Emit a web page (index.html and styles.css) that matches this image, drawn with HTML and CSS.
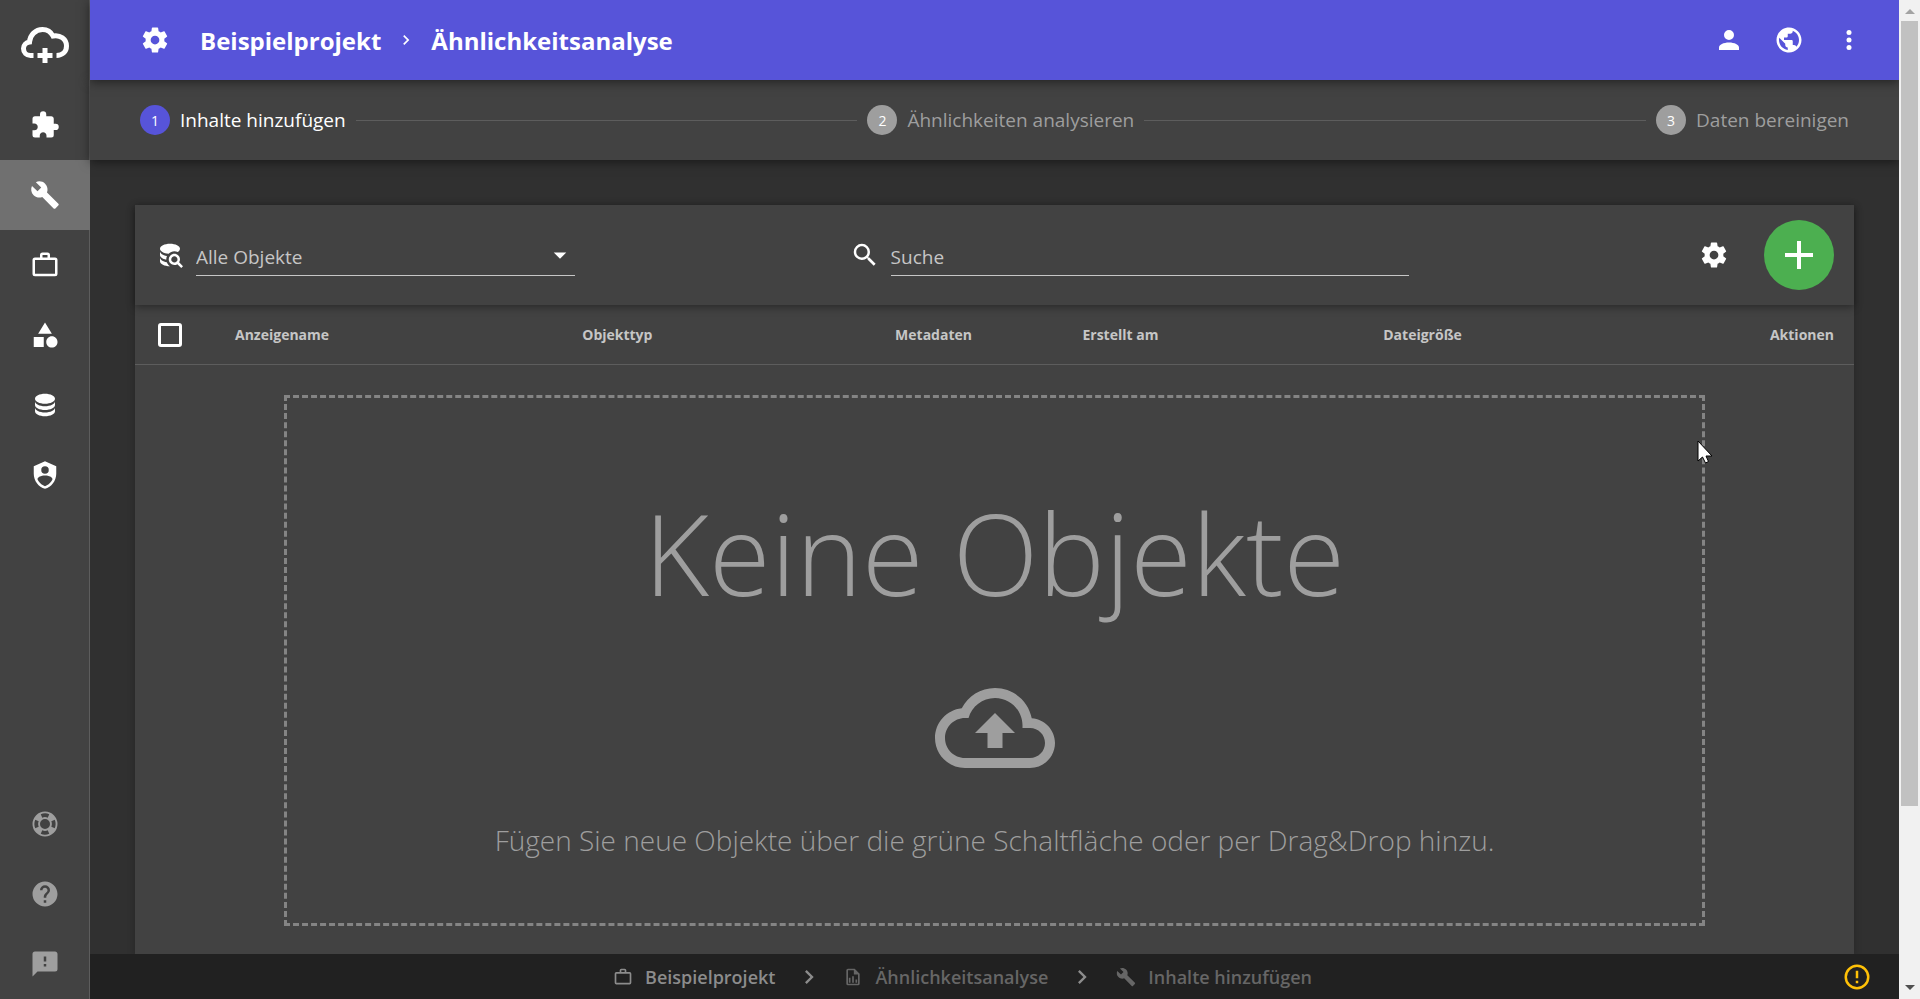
FILE: index.html
```
<!DOCTYPE html>
<html lang="de">
<head>
  <meta charset="UTF-8">
  <meta name="viewport" content="width=device-width, initial-scale=1.0">
  <title>Ähnlichkeitsanalyse</title>
  <link rel="stylesheet" href="styles.css">
</head>
<body>
  <!-- icon sprite -->
  <svg class="sprite" aria-hidden="true">
    <symbol id="i-cog" viewBox="0 0 24 24"><path d="M12,15.5A3.5,3.5 0 0,1 8.5,12A3.5,3.5 0 0,1 12,8.5A3.5,3.5 0 0,1 15.5,12A3.5,3.5 0 0,1 12,15.5M19.43,12.97C19.47,12.65 19.5,12.33 19.5,12C19.5,11.67 19.47,11.34 19.43,11L21.54,9.37C21.73,9.22 21.78,8.95 21.66,8.73L19.66,5.27C19.54,5.05 19.27,4.96 19.05,5.05L16.56,6.05C16.04,5.66 15.5,5.32 14.87,5.07L14.5,2.42C14.46,2.18 14.25,2 14,2H10C9.75,2 9.54,2.18 9.5,2.42L9.13,5.07C8.5,5.32 7.96,5.66 7.44,6.05L4.95,5.05C4.73,4.96 4.46,5.05 4.34,5.27L2.34,8.73C2.21,8.95 2.27,9.22 2.46,9.37L4.57,11C4.53,11.34 4.5,11.67 4.5,12C4.5,12.33 4.53,12.65 4.57,12.97L2.46,14.63C2.27,14.78 2.21,15.05 2.34,15.27L4.34,18.73C4.46,18.95 4.73,19.03 4.95,18.95L7.44,17.94C7.96,18.34 8.5,18.68 9.13,18.93L9.5,21.58C9.54,21.82 9.75,22 10,22H14C14.25,22 14.46,21.82 14.5,21.58L14.87,18.93C15.5,18.67 16.04,18.34 16.56,17.94L19.05,18.95C19.27,19.03 19.54,18.95 19.66,18.73L21.66,15.27C21.78,15.05 21.73,14.78 21.54,14.63L19.43,12.97Z"/></symbol>
    <symbol id="i-wrench" viewBox="0 0 24 24"><path d="M22.7,19L13.6,9.9C14.5,7.6 14,4.9 12.1,3C10.1,1 7.1,0.6 4.7,1.7L9,6L6,9L1.6,4.7C0.4,7.1 0.9,10.1 2.9,12.1C4.8,14 7.5,14.5 9.8,13.6L18.9,22.7C19.3,23.1 19.9,23.1 20.3,22.7L22.6,20.4C23.1,20 23.1,19.3 22.7,19Z"/></symbol>
    <symbol id="i-briefcase" viewBox="0 0 24 24"><path fill-rule="evenodd" d="M20,6H16V4A2,2 0 0,0 14,2H10A2,2 0 0,0 8,4V6H4A2,2 0 0,0 2,8V19A2,2 0 0,0 4,21H20A2,2 0 0,0 22,19V8A2,2 0 0,0 20,6ZM10,4H14V6H10ZM4,8H20V19H4Z"/></symbol>
    <symbol id="i-chevron" viewBox="0 0 24 24"><path d="M8.59,16.58L13.17,12L8.59,7.41L10,6L16,12L10,18L8.59,16.58Z"/></symbol>
  </svg>

  <nav class="sidebar" aria-label="Hauptnavigation">
    <a class="logo" href="#" aria-label="Startseite">
      <svg viewBox="0 0 48 36"><path class="logo-cloud" d="M12.5 28.500H9.500C5.500 28.500 2.500 25.500 2.500 21.500C2.500 18 5 15.500 8.500 15C9 8 14.500 2.500 21.500 2.500C26.500 2.500 30 5 32 9C39 7.500 45.500 12 45.500 19C45.500 25 41 28.500 35.500 28.500"/><path d="M21.500 21H26.500V26H31.5V31H26.500V36H21.500V31H16.5V26H21.500Z"/></svg>
    </a>
    <a class="nav-item" href="#" aria-label="Erweiterungen">
      <svg class="icon" viewBox="0 0 24 24"><path d="M20.5,11H19V7C19,5.89 18.1,5 17,5H13V3.5A2.5,2.5 0 0,0 10.5,1A2.5,2.5 0 0,0 8,3.5V5H4A2,2 0 0,0 2,7V10.8H3.5C5,10.8 6.2,12 6.2,13.5C6.2,15 5,16.2 3.5,16.2H2V20A2,2 0 0,0 4,22H7.8V20.5C7.8,19 9,17.8 10.5,17.8C12,17.8 13.2,19 13.2,20.5V22H17A2,2 0 0,0 19,20V16H20.5A2.5,2.5 0 0,0 23,13.5A2.500,2.500 0 0,0 20.500,11Z"/></svg>
    </a>
    <a class="nav-item active" href="#" aria-label="Werkzeuge">
      <svg class="icon"><use href="#i-wrench"/></svg>
    </a>
    <a class="nav-item" href="#" aria-label="Projekte">
      <svg class="icon"><use href="#i-briefcase"/></svg>
    </a>
    <a class="nav-item" href="#" aria-label="Objekttypen">
      <svg class="icon" viewBox="0 0 24 24"><path d="M11,13.5V21.5H3V13.5H11M12,2L17.5,11H6.5L12,2M17.5,13C20,13 22,15 22,17.5C22,20 20,22 17.5,22C15,22 13,20 13,17.5C13,15 15,13 17.5,13Z"/></svg>
    </a>
    <a class="nav-item" href="#" aria-label="Datenbank">
      <svg class="icon" viewBox="0 0 24 24"><path d="M12,3C7.58,3 4,4.79 4,7C4,9.21 7.58,11 12,11C16.42,11 20,9.21 20,7C20,4.79 16.42,3 12,3M4,9V12C4,14.21 7.58,16 12,16C16.42,16 20,14.21 20,12V9C20,11.21 16.42,13 12,13C7.58,13 4,11.21 4,9M4,14V17C4,19.21 7.58,21 12,21C16.42,21 20,19.21 20,17V14C20,16.21 16.42,18 12,18C7.58,18 4,16.21 4,14Z"/></svg>
    </a>
    <a class="nav-item" href="#" aria-label="Verwaltung">
      <svg class="icon" viewBox="0 0 24 24"><path fill-rule="evenodd" d="M12,1L3,5V11C3,16.55 6.84,21.74 12,23C17.16,21.74 21,16.55 21,11V5L12,1M12,5A3,3 0 0,1 15,8A3,3 0 0,1 12,11A3,3 0 0,1 9,8A3,3 0 0,1 12,5M17.13,17C15.92,18.85 14.11,20.24 12,20.92C9.89,20.24 8.08,18.85 6.87,17C6.53,16.5 6.24,16 6,15.47C6,13.82 8.71,12.47 12,12.47C15.29,12.47 18,13.79 18,15.47C17.76,16 17.47,16.5 17.13,17Z"/></svg>
    </a>
    <div class="sidebar-bottom">
      <a class="nav-item" href="#" aria-label="Support">
        <svg class="icon" viewBox="0 0 24 24"><path fill-rule="evenodd" d="M19.79,15.41C20.74,13.24 20.74,10.75 19.79,8.59L17.05,9.83C17.65,11.21 17.65,12.78 17.06,14.17L19.79,15.41M15.42,4.21C13.25,3.26 10.76,3.26 8.59,4.21L9.83,6.94C11.22,6.35 12.79,6.35 14.18,6.95L15.42,4.21M4.21,8.58C3.26,10.76 3.26,13.24 4.21,15.42L6.95,14.17C6.35,12.79 6.35,11.21 6.95,9.82L4.21,8.58M8.59,19.79C10.76,20.74 13.25,20.74 15.42,19.78L14.18,17.05C12.8,17.65 11.22,17.65 9.84,17.06L8.59,19.79M12,2A10,10 0 0,1 22,12A10,10 0 0,1 12,22A10,10 0 0,1 2,12A10,10 0 0,1 12,2M12,8A4,4 0 0,0 8,12A4,4 0 0,0 12,16A4,4 0 0,0 16,12A4,4 0 0,0 12,8Z"/></svg>
      </a>
      <a class="nav-item" href="#" aria-label="Hilfe">
        <svg class="icon" viewBox="0 0 24 24"><path fill-rule="evenodd" d="M15.07,11.25L14.17,12.17C13.45,12.89 13,13.5 13,15H11V14.5C11,13.39 11.45,12.39 12.17,11.67L13.41,10.41C13.78,10.05 14,9.55 14,9C14,7.89 13.1,7 12,7A2,2 0 0,0 10,9H8A4,4 0 0,1 12,5A4,4 0 0,1 16,9C16,9.88 15.64,10.67 15.07,11.25M13,19H11V17H13M12,2A10,10 0 0,0 2,12A10,10 0 0,0 12,22A10,10 0 0,0 22,12C22,6.47 17.5,2 12,2Z"/></svg>
      </a>
      <a class="nav-item" href="#" aria-label="Feedback">
        <svg class="icon" viewBox="0 0 24 24"><path fill-rule="evenodd" d="M13,10H11V6H13M13,14H11V12H13M20,2H4A2,2 0 0,0 2,4V22L6,18H20A2,2 0 0,0 22,16V4C22,2.89 21.1,2 20,2Z"/></svg>
      </a>
    </div>
  </nav>

  <div class="page">
    <header class="topbar">
      <svg class="icon"><use href="#i-cog"/></svg>
      <h1 class="title">
        <a href="#">Beispielprojekt</a>
        <svg class="icon-small"><use href="#i-chevron"/></svg>
        <span>Ähnlichkeitsanalyse</span>
      </h1>
      <div class="topbar-actions">
        <button type="button" aria-label="Benutzer"><svg class="icon" viewBox="0 0 24 24"><path d="M12,4A4,4 0 0,1 16,8A4,4 0 0,1 12,12A4,4 0 0,1 8,8A4,4 0 0,1 12,4M12,14C16.42,14 20,15.79 20,18V20H4V18C4,15.79 7.58,14 12,14Z"/></svg></button>
        <button type="button" aria-label="Sprache"><svg class="icon" viewBox="0 0 24 24"><path d="M12 2C6.48 2 2 6.48 2 12s4.48 10 10 10 10-4.48 10-10S17.52 2 12 2zm-1 17.93c-3.95-.49-7-3.85-7-7.93 0-.62.08-1.21.21-1.79L9 15v1c0 1.1.9 2 2 2v1.93zm6.9-2.54c-.26-.81-1-1.39-1.9-1.39h-1v-3c0-.55-.45-1-1-1H8v-2h2c.55 0 1-.45 1-1V7h2c1.1 0 2-.9 2-2v-.41c2.93 1.19 5 4.06 5 7.41 0 2.080-.8 3.970-2.100 5.390z"/></svg></button>
        <button type="button" aria-label="Menü"><svg class="icon" viewBox="0 0 24 24"><circle cx="12" cy="6" r="2"/><circle cx="12" cy="12" r="2"/><circle cx="12" cy="18" r="2"/></svg></button>
      </div>
    </header>

    <div class="stepper">
      <div class="step current"><span class="step-number">1</span>Inhalte hinzufügen</div>
      <div class="step-line"></div>
      <div class="step"><span class="step-number">2</span>Ähnlichkeiten analysieren</div>
      <div class="step-line"></div>
      <div class="step"><span class="step-number">3</span>Daten bereinigen</div>
    </div>

    <main class="content">
      <section class="card">
        <div class="toolbar">
          <div class="field filter">
            <svg class="icon" viewBox="0 0 24 24"><path d="M18.68,12.32C16.92,10.56 14.07,10.57 12.32,12.33C10.56,14.09 10.56,16.94 12.32,18.69C13.81,20.17 16.11,20.43 17.89,19.32L21,22.39L22.39,21L19.3,17.89C20.43,16.12 20.17,13.8 18.68,12.32M17.27,17.27C16.29,18.25 14.71,18.24 13.73,17.27C12.76,16.29 12.76,14.71 13.74,13.73C14.71,12.76 16.29,12.76 17.27,13.73C18.24,14.71 18.24,16.29 17.27,17.27M10.9,20.1C10.25,19.44 9.74,18.65 9.42,17.78C6.27,17.25 4,15.76 4,14V17C4,19.21 7.58,21 12,21V21C11.6,20.74 11.23,20.44 10.9,20.1M4,9V12C4,13.68 6.07,15.12 9,15.7C9,15.63 9,15.57 9,15.5C9,14.57 9.2,13.65 9.58,12.81C6.34,12.3 4,10.79 4,9M12,3C7.58,3 4,4.79 4,7C4,9 7,10.68 10.85,11H10.9C12.1,9.74 13.76,9 15.5,9C16.41,9 17.31,9.19 18.14,9.56C19.17,9.09 19.87,8.12 20,7C20,4.79 16.42,3 12,3Z"/></svg>
            <div class="select-wrap">
              <select aria-label="Objektfilter">
                <option>Alle Objekte</option>
              </select>
              <svg class="icon select-arrow" viewBox="0 0 24 24"><path d="M7,10L12,15L17,10H7Z"/></svg>
            </div>
          </div>
          <div class="field search">
            <svg class="icon" viewBox="0 0 24 24"><path d="M9.5,3A6.5,6.5 0 0,1 16,9.5C16,11.11 15.41,12.59 14.44,13.73L14.71,14H15.5L20.5,19L19,20.5L14,15.5V14.71L13.73,14.44C12.59,15.41 11.11,16 9.5,16A6.5,6.5 0 0,1 3,9.5A6.5,6.5 0 0,1 9.5,3M9.5,5C7,5 5,7 5,9.5C5,12 7,14 9.5,14C12,14 14,12 14,9.5C14,7 12,5 9.5,5Z"/></svg>
            <input type="text" placeholder="Suche" aria-label="Suche">
          </div>
          <div class="toolbar-actions">
            <button type="button" class="settings" aria-label="Einstellungen"><svg class="icon"><use href="#i-cog"/></svg></button>
            <button type="button" class="add" aria-label="Hinzufügen"><svg viewBox="0 0 28 28"><path d="M12 0H16V12H28V16H16V28H12V16H0V12H12Z"/></svg></button>
          </div>
        </div>

        <table class="objects">
          <thead>
            <tr>
              <th class="col-check"><input type="checkbox" aria-label="Alle auswählen"></th>
              <th class="col-name">Anzeigename</th>
              <th class="col-type">Objekttyp</th>
              <th class="col-meta">Metadaten</th>
              <th class="col-created">Erstellt am</th>
              <th class="col-size">Dateigröße</th>
              <th class="col-actions">Aktionen</th>
            </tr>
          </thead>
        </table>

        <div class="dropzone">
          <h2>Keine Objekte</h2>
          <svg class="upload" viewBox="0 0 24 24"><path fill-rule="evenodd" d="M19.35 10.04C18.67 6.59 15.64 4 12 4 9.11 4 6.6 5.64 5.35 8.04 2.34 8.36 0 10.91 0 14c0 3.31 2.69 6 6 6h13c2.76 0 5-2.24 5-5 0-2.64-2.05-4.78-4.65-4.96zM19 18H6c-2.21 0-4-1.79-4-4s1.79-4 4-4h.71C7.370 7.690 9.480 6 12 6c3.040 0 5.500 2.460 5.500 5.500v.5H19c1.660 0 3 1.340 3 3s-1.340 3-3 3z"/><path d="M12 9L16 13H13.500V16H10.500V13H8Z"/></svg>
          <p>Fügen Sie neue Objekte über die grüne Schaltfläche oder per Drag&amp;Drop hinzu.</p>
          <svg class="pointer" viewBox="0 0 16 24" aria-hidden="true"><path d="M1 1V21L5.500 17L8.500 23L11.500 21.500L9 16H15Z"/></svg>
        </div>
      </section>
    </main>

    <footer class="footer">
      <nav class="crumbs" aria-label="Pfad">
        <a class="crumb" href="#"><svg class="icon-small"><use href="#i-briefcase"/></svg>Beispielprojekt</a>
        <svg class="crumb-sep"><use href="#i-chevron"/></svg>
        <a class="crumb dim" href="#"><svg class="icon-small" viewBox="0 0 24 24"><path d="M14,2L20,8V20A2,2 0 0,1 18,22H6A2,2 0 0,1 4,20V4A2,2 0 0,1 6,2H14M18,20V9H13V4H6V20H18M9,13V19H7V13H9M15,15V19H17V15H15M11,11V19H13V11H11Z"/></svg>Ähnlichkeitsanalyse</a>
        <svg class="crumb-sep"><use href="#i-chevron"/></svg>
        <a class="crumb dim" href="#"><svg class="icon-small"><use href="#i-wrench"/></svg>Inhalte hinzufügen</a>
      </nav>
      <button type="button" class="alert" aria-label="Warnungen"><svg class="icon" viewBox="0 0 24 24"><path d="M11,15H13V17H11V15M11,7H13V13H11V7M12,2C6.47,2 2,6.5 2,12A10,10 0 0,0 12,22A10,10 0 0,0 22,12A10,10 0 0,0 12,2M12,20A8,8 0 0,1 4,12A8,8 0 0,1 12,4A8,8 0 0,1 20,12A8,8 0 0,1 12,20Z"/></svg></button>
    </footer>
  </div>

  <div class="scrollbar" aria-hidden="true">
    <svg viewBox="0 0 10 5"><path class="up" d="M5 0L10 5H0Z"/></svg>
    <div class="scroll-track"><div class="scroll-thumb"></div></div>
    <svg viewBox="0 0 10 5"><path class="down" d="M0 0H10L5 5Z"/></svg>
  </div>
</body>
</html>
```
FILE: styles.css
```
* {
  box-sizing: border-box;
}
body {
  margin: 0;
  display: flex;
  height: 100vh;
  overflow: hidden;
  background: #303030;
  color: #fff;
  font-family: "Open Sans", "Noto Sans", sans-serif;
  font-size: 19px;
}
a {
  color: inherit;
  text-decoration: none;
}
button {
  display: flex;
  align-items: center;
  justify-content: center;
  padding: 0;
  border: none;
  background: none;
  color: inherit;
  cursor: pointer;
}
svg {
  display: block;
  flex: none;
  fill: currentColor;
}
.sprite {
  position: absolute;
  width: 0;
  height: 0;
}
.icon {
  width: 30px;
  height: 30px;
}
.icon-small {
  width: 20px;
  height: 20px;
}

/* sidebar */
.sidebar {
  flex: none;
  display: flex;
  flex-direction: column;
  width: 90px;
  background: linear-gradient(#5d5d5d, #5d5d5d) right / 1px 100% no-repeat #424242;
}
.logo {
  display: flex;
  align-items: center;
  justify-content: center;
  height: 90px;
}
.logo svg {
  width: 48px;
  height: 36px;
}
.logo-cloud {
  fill: none;
  stroke: #fff;
  stroke-width: 5;
}
.nav-item {
  display: flex;
  align-items: center;
  justify-content: center;
  height: 70px;
}
.nav-item.active {
  background: #707070;
}
.sidebar-bottom {
  margin-top: auto;
  color: #9e9e9e;
}

/* main column */
.page {
  flex: 1;
  min-width: 0;
  display: flex;
  flex-direction: column;
}
.topbar {
  position: relative;
  z-index: 2;
  flex: none;
  display: flex;
  align-items: center;
  gap: 30px;
  height: 80px;
  padding: 0 20px 0 50px;
  background: #5754d9;
  box-shadow: 0 2px 10px rgba(0, 0, 0, 0.5);
}
.title {
  display: flex;
  align-items: center;
  gap: 15px;
  margin: 0;
  font-size: 24px;
  font-weight: 700;
}
.topbar-actions {
  display: flex;
  margin-left: auto;
}
.topbar-actions button {
  width: 60px;
  height: 60px;
}
.stepper {
  position: relative;
  z-index: 1;
  flex: none;
  display: flex;
  align-items: center;
  gap: 10px;
  height: 80px;
  padding: 0 50px;
  background: #424242;
  box-shadow: 0 2px 10px rgba(0, 0, 0, 0.5);
}
.step {
  display: flex;
  align-items: center;
  gap: 10px;
  color: #9e9e9e;
}
.step.current {
  color: #fff;
}
.step-number {
  display: flex;
  align-items: center;
  justify-content: center;
  width: 30px;
  height: 30px;
  border-radius: 50%;
  background: #9e9e9e;
  color: #fff;
  font-size: 14px;
}
.step.current .step-number {
  background: #5754d9;
}
.step-line {
  flex: 1;
  height: 1px;
  background: #5d5d5d;
}

/* content */
.content {
  flex: 1;
  min-height: 0;
  display: flex;
  padding: 45px 45px 0;
}
.card {
  flex: 1;
  min-width: 0;
  background: #424242;
  box-shadow: 0 2px 8px rgba(0, 0, 0, 0.2);
}
.toolbar {
  position: relative;
  display: flex;
  align-items: center;
  justify-content: space-between;
  height: 100px;
  padding: 0 20px;
  box-shadow: 0 2px 8px rgba(0, 0, 0, 0.4);
}
.field {
  display: flex;
  align-items: center;
  gap: 11px;
}
.filter {
  width: 25%;
}
.search {
  width: 33.33%;
}
.select-wrap {
  position: relative;
  flex: 1;
}
.select-arrow {
  position: absolute;
  top: 6px;
  right: 0;
  pointer-events: none;
}
.field select,
.field input {
  display: block;
  width: 100%;
  height: 42px;
  padding: 4px 0 0;
  border: none;
  border-bottom: 1px solid #c6c6c6;
  border-radius: 0;
  outline: none;
  appearance: none;
  background: none;
  color: #c6c6c6;
  font: inherit;
}
.field input::placeholder {
  color: #c6c6c6;
  opacity: 1;
}
.toolbar-actions {
  display: flex;
  align-items: center;
  gap: 20px;
}
.settings {
  width: 60px;
  height: 60px;
}
.add {
  width: 70px;
  height: 70px;
  border-radius: 50%;
  background: #4caf50;
}
.add svg {
  width: 28px;
  height: 28px;
}

.objects {
  width: 100%;
  table-layout: fixed;
  border-spacing: 0;
}
.objects th {
  height: 60px;
  padding: 0 20px;
  border-bottom: 1px solid #5d5d5d;
  color: #c6c6c6;
  font-size: 14px;
  font-weight: 700;
  text-align: left;
}
.objects .col-check {
  width: 80px;
}
.col-name {
  width: 20.2%;
}
.col-type {
  width: 18.2%;
}
.col-meta {
  width: 10.9%;
}
.col-created {
  width: 17.5%;
}
.objects .col-actions {
  text-align: right;
}
.objects input {
  display: block;
  width: 24px;
  height: 24px;
  margin: 0 3px;
  border: 3px solid #fff;
  border-radius: 3px;
  appearance: none;
}

.dropzone {
  position: relative;
  display: flex;
  flex-direction: column;
  align-items: center;
  margin: 30px 149px 0;
  padding: 75px 20px 63px;
  border: 3px dashed #848484;
  color: #9e9e9e;
  font-weight: 300;
}
.dropzone h2 {
  margin: 0;
  font-size: 112px;
  font-weight: 300;
  line-height: 160px;
}
.upload {
  width: 120px;
  height: 120px;
  margin: 35px 0 32px;
}
.dropzone p {
  margin: 0;
  font-size: 28px;
  line-height: 40px;
}
.pointer {
  position: absolute;
  top: 42px;
  right: -11px;
  width: 16px;
  height: 24px;
  fill: #fff;
  stroke: #000;
}

/* footer */
.footer {
  position: relative;
  flex: none;
  display: flex;
  align-items: center;
  height: 45px;
  padding: 0 27px 0 0;
  background: #212121;
}
.crumbs {
  flex: 1;
  display: flex;
  align-items: center;
  justify-content: center;
  gap: 20px;
  color: #8c8c8c;
  font-size: 18px;
  font-weight: 600;
}
.crumb {
  display: flex;
  align-items: center;
  gap: 12px;
}
.crumb.dim {
  color: #666;
}
.crumb-sep {
  width: 28px;
  height: 28px;
}
.alert {
  margin-left: 7px;
  color: #ffc107;
}

/* scroll bar */
.scrollbar {
  position: relative;
  z-index: 3;
  flex: none;
  display: flex;
  flex-direction: column;
  align-items: center;
  width: 21px;
  padding: 9px 2px;
  background: #f1f1f1;
  color: #505050;
}
.scrollbar svg {
  width: 10px;
  height: 5px;
}
.scrollbar .up {
  fill: #a3a3a3;
}
.scroll-track {
  flex: 1;
  width: 17px;
  margin: 7px 0;
}
.scroll-thumb {
  height: 82%;
  background: #c1c1c1;
}
```
